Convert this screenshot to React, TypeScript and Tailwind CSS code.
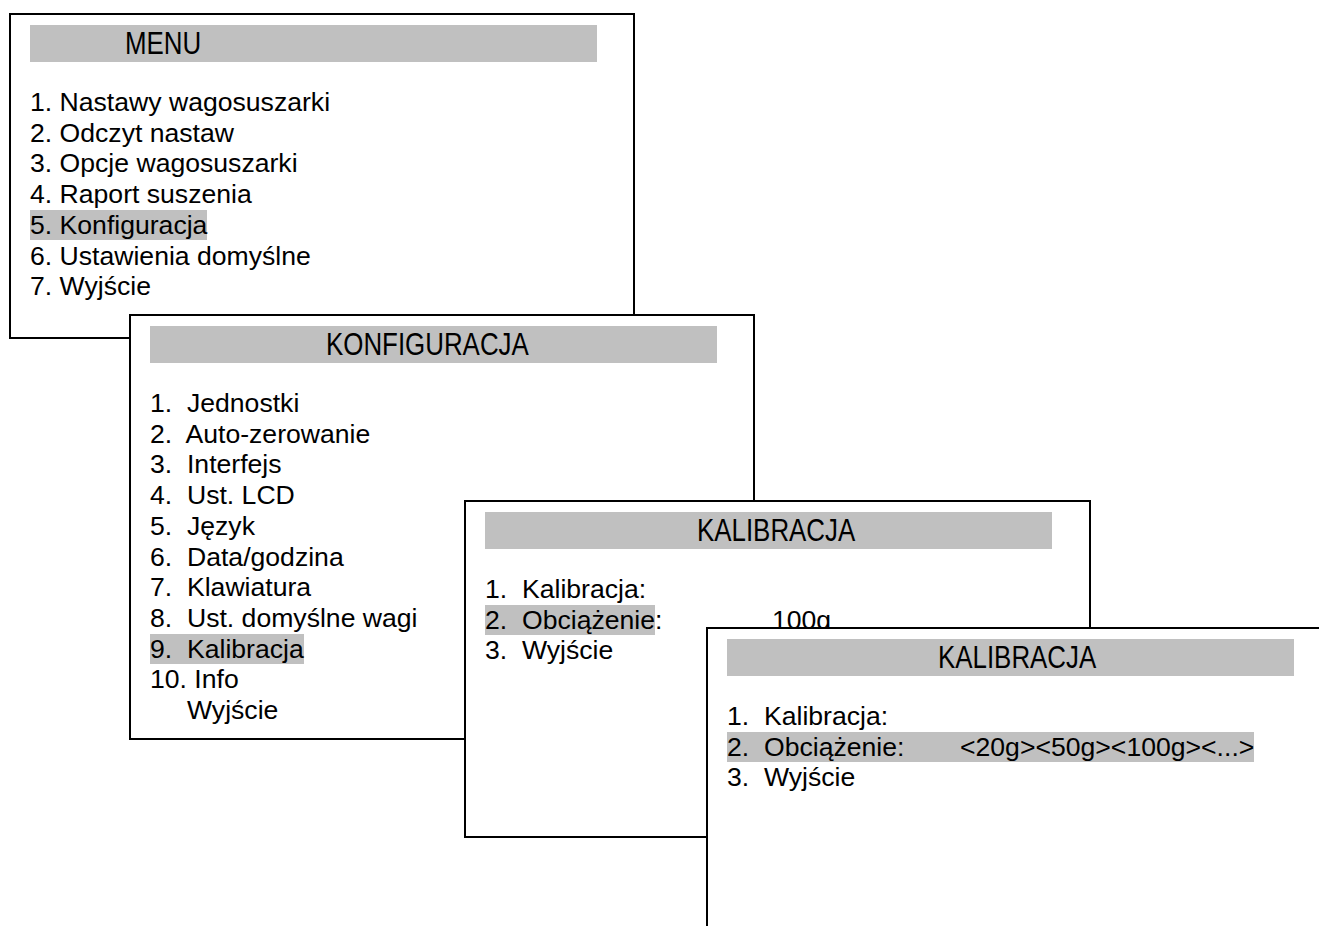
import React from "react";

const hl = "bg-[#c0c0c0]";

function Title({ text, pad }: { text: string; pad: string }) {
  return (
    <div
      className={`h-[37px] w-[567px] bg-[#c0c0c0] flex items-center ${pad} font-['Liberation_Sans',Arial,sans-serif] text-[31px] leading-none text-black`}
    >
      <span className="inline-block origin-left scale-x-[0.835] whitespace-nowrap">{text}</span>
    </div>
  );
}

function Box({
  pos,
  title,
  pad,
  children,
}: {
  pos: string;
  title: string;
  pad: string;
  children: React.ReactNode;
}) {
  return (
    <div className={`absolute ${pos} border-2 border-black bg-white pl-[19px] pt-[10px]`}>
      <Title text={title} pad={pad} />
      <div className="mt-[25px] text-[26.6px] leading-[30.7px] whitespace-pre text-black">{children}</div>
    </div>
  );
}

export default function App() {
  return (
    <div className="relative w-[1319px] h-[926px] overflow-hidden bg-white font-['Liberation_Sans',Arial,sans-serif]">
      <Box pos="left-[9px] top-[13px] w-[626px] h-[326px]" title="MENU" pad="pl-[95px]">
        <div>1. Nastawy wagosuszarki</div>
        <div>2. Odczyt nastaw</div>
        <div>3. Opcje wagosuszarki</div>
        <div>4. Raport suszenia</div>
        <div>
          <span className={hl}>5. Konfiguracja</span>
        </div>
        <div>6. Ustawienia domyślne</div>
        <div>7. Wyjście</div>
      </Box>

      <Box pos="left-[129px] top-[314px] w-[626px] h-[426px]" title="KONFIGURACJA" pad="pl-[176px]">
        <div>1.  Jednostki</div>
        <div>2.  Auto-zerowanie</div>
        <div>3.  Interfejs</div>
        <div>4.  Ust. LCD</div>
        <div>5.  Język</div>
        <div>6.  Data/godzina</div>
        <div>7.  Klawiatura</div>
        <div>8.  Ust. domyślne wagi</div>
        <div>
          <span className={hl}>9.  Kalibracja</span>
        </div>
        <div>10. Info</div>
        <div className="pl-[37px]">Wyjście</div>
      </Box>

      <Box pos="left-[464px] top-[500px] w-[627px] h-[338px]" title="KALIBRACJA" pad="pl-[212px]">
        <div>1.  Kalibracja:</div>
        <div>
          <span className="inline-block w-[287px]">
            <span className={hl}>2.  Obciążenie</span>:
          </span>
          100g
        </div>
        <div>3.  Wyjście</div>
      </Box>

      <Box pos="left-[706px] top-[627px] w-[627px] h-[340px]" title="KALIBRACJA" pad="pl-[211px]">
        <div>1.  Kalibracja:</div>
        <div>
          <span className={hl}>
            <span className="inline-block w-[233px]">2.  Obciążenie:</span>
            {"<20g><50g><100g><...>"}
          </span>
        </div>
        <div>3.  Wyjście</div>
      </Box>
    </div>
  );
}
